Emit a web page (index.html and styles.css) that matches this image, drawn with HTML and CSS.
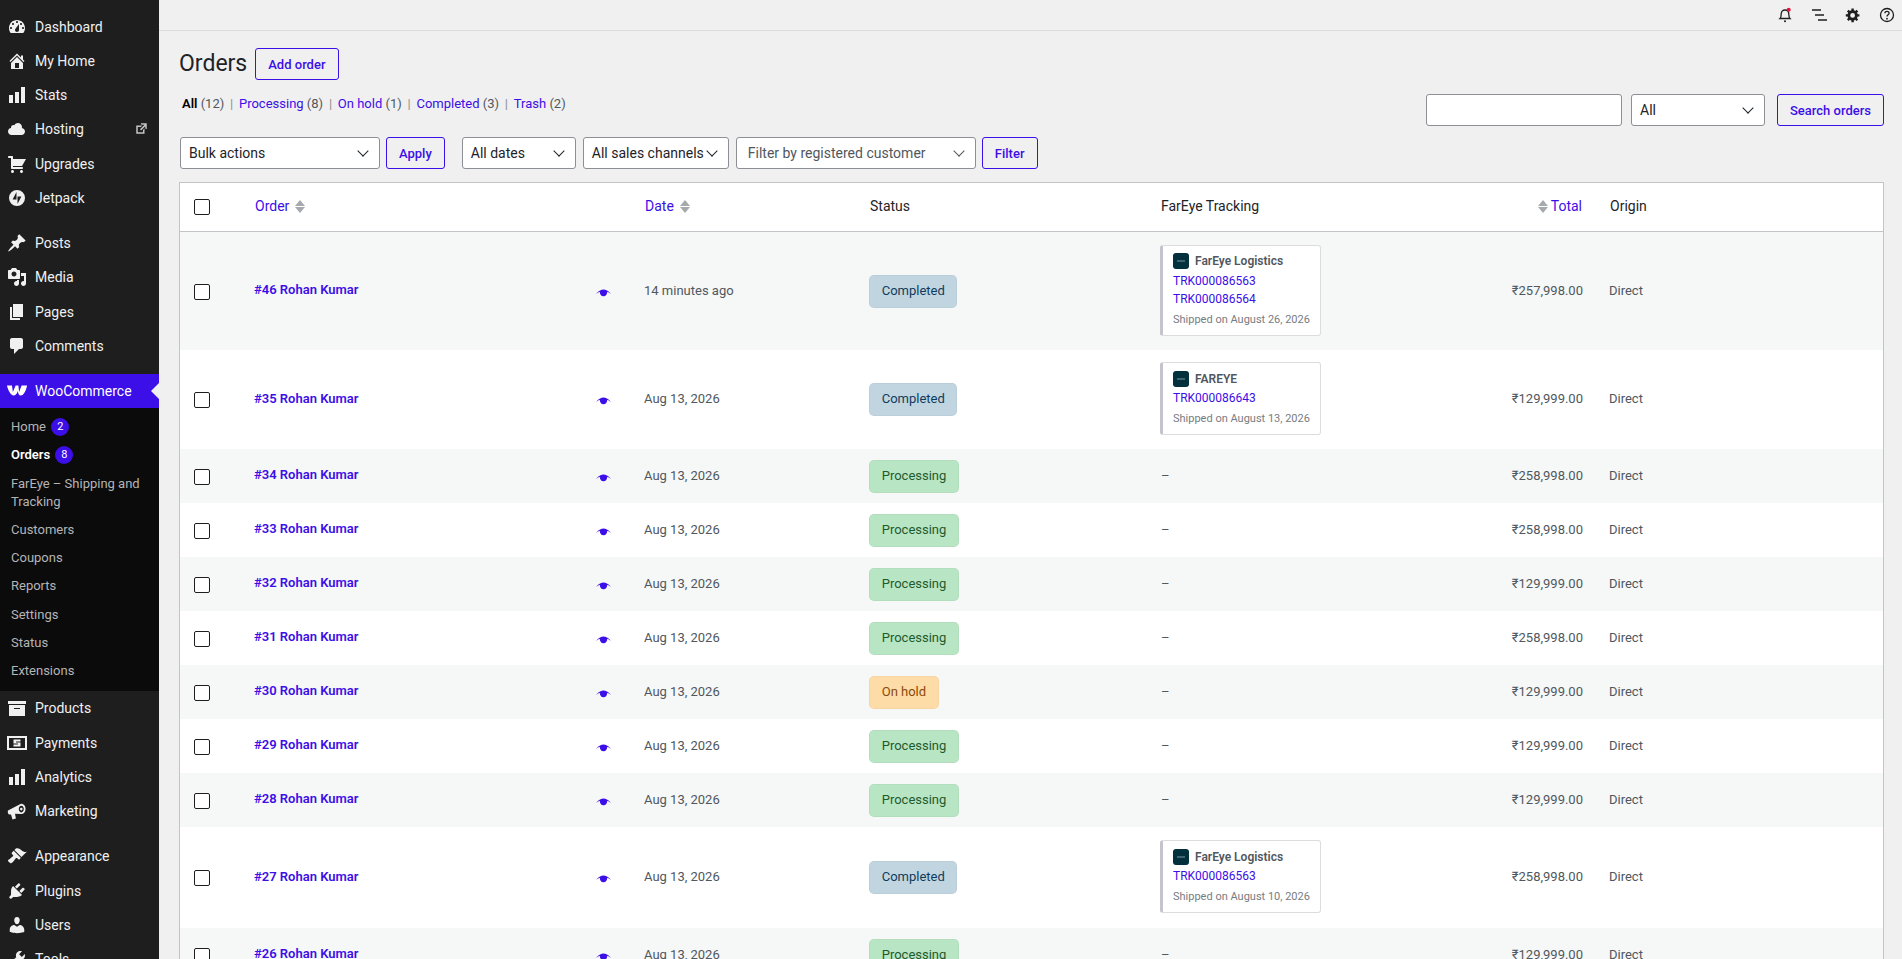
FILE: index.html
```html
<!DOCTYPE html>
<html lang="en">
<head>
  <meta charset="UTF-8" />
  <meta name="viewport" content="width=device-width, initial-scale=1.0" />
  <title>Orders</title>
  <link rel="stylesheet" href="styles.css">
</head>
<body>
  <aside class="sidebar">
    <ul class="menu">
      <li class="menu-item"><svg class="menu-icon" viewBox="0 0 20 20"><path fill-rule="evenodd" d="M3.76 16h12.48c1.1-1.37 1.76-3.11 1.76-5 0-4.42-3.58-8-8-8s-8 3.58-8 8c0 1.89.66 3.63 1.76 5zM10 4c.55 0 1 .45 1 1s-.45 1-1 1-1-.45-1-1 .45-1 1-1zM6 6c.55 0 1 .45 1 1s-.45 1-1 1-1-.45-1-1 .45-1 1-1zm8 0c.55 0 1 .45 1 1s-.45 1-1 1-1-.45-1-1 .45-1 1-1zm-5.37 5.55L12 7v6c0 1.1-.9 2-2 2s-2-.9-2-2c0-.57.24-1.08.63-1.45zM4 10c.55 0 1 .45 1 1s-.45 1-1 1-1-.45-1-1 .45-1 1-1zm12 0c.55 0 1 .45 1 1s-.45 1-1 1-1-.45-1-1 .45-1 1-1z"/></svg>Dashboard</li>
      <li class="menu-item"><svg class="menu-icon" viewBox="0 0 20 20"><path fill-rule="evenodd" d="M16 8.5l1.53 1.53-1.06 1.06L10 4.62l-6.47 6.47-1.06-1.06L10 2.5l4 4v-2h2v4zm-6-2.46l6 5.99V18H4v-5.97zM12 17v-5H8v5h4z"/></svg>My Home</li>
      <li class="menu-item"><svg class="menu-icon" viewBox="0 0 20 20"><path d="M18 18V2h-4v16h4zm-6 0V7H8v11h4zm-6 0v-8H2v8h4z"/></svg>Stats</li>
      <li class="menu-item"><svg class="menu-icon" viewBox="0 0 20 20"><path d="M14.9 9c1.8.2 3.1 1.7 3.1 3.5 0 1.9-1.6 3.5-3.5 3.5h-10C2.6 16 1 14.4 1 12.5 1 10.7 2.3 9.3 4.1 9.1 4 8.9 4 8.7 4 8.5 4 7.1 5.1 6 6.5 6c.3 0 .7.1.9.2C8.1 4.9 9.4 4 11 4c2.2 0 4 1.8 4 4 0 .4-.1.7-.1 1z"/></svg>Hosting<svg class="external" viewBox="0 0 20 20"><path d="M9 3h8v8l-2-1V6.92l-5.6 5.59-1.41-1.41L14.08 5H10zm3 12v-3l2-2v7H3V6h8L9 8H5v7h7z"/></svg></li>
      <li class="menu-item"><svg class="menu-icon" viewBox="0 0 20 20"><path d="M6 13h9c.55 0 1 .45 1 1s-.45 1-1 1H5c-.55 0-1-.45-1-1V4H2c-.55 0-1-.45-1-1s.45-1 1-1h3c.55 0 1 .45 1 1v2h13l-4 7H6v1zm-.5 3c.83 0 1.5.67 1.5 1.5S6.33 19 5.5 19 4 18.33 4 17.5 4.67 16 5.5 16zm9 0c.83 0 1.5.67 1.5 1.5s-.67 1.5-1.5 1.5-1.5-.67-1.5-1.5.67-1.5 1.5-1.5z"/></svg>Upgrades</li>
      <li class="menu-item"><svg class="menu-icon" viewBox="0 0 20 20"><path fill-rule="evenodd" d="M10 2a8 8 0 1 0 0 16 8 8 0 0 0 0-16zM9.5 4v7.500H5.600zM10.500 8.500h3.900L10.500 16z"/></svg>Jetpack</li>

      <li class="menu-item group-start"><svg class="menu-icon" viewBox="0 0 20 20"><path d="M10.44 3.02l1.82-1.82 6.36 6.35-1.83 1.82c-1.05-.68-2.48-.57-3.41.36l-.75.75c-.92.93-1.04 2.35-.35 3.41l-1.83 1.82-2.41-2.41-2.8 2.79c-.42.42-3.38 2.71-3.8 2.29s1.86-3.39 2.28-3.81l2.79-2.79L4.1 9.36l1.83-1.82c1.05.69 2.48.57 3.4-.36l.75-.75c.93-.92 1.05-2.35.36-3.41z"/></svg>Posts</li>
      <li class="menu-item"><svg class="menu-icon" viewBox="0 0 20 20"><path fill-rule="evenodd" d="M13 11V4c0-.55-.45-1-1-1h-1.67L9 1H5L3.67 3H2c-.55 0-1 .45-1 1v7c0 .55.45 1 1 1h10c.55 0 1-.45 1-1zM7 4.5c1.38 0 2.5 1.12 2.5 2.5S8.38 9.5 7 9.5 4.5 8.38 4.5 7 5.62 4.5 7 4.5zM14 6h5v10.5c0 1.38-1.12 2.5-2.5 2.5S14 17.88 14 16.5s1.12-2.5 2.5-2.5c.17 0 .34.02.5.05V9h-3V6zm-4 8.05V13h2v3.5c0 1.38-1.12 2.5-2.5 2.5S7 17.88 7 16.5 8.12 14 9.5 14c.17 0 .34.02.5.05z"/></svg>Media</li>
      <li class="menu-item"><svg class="menu-icon" viewBox="0 0 20 20"><path d="M6 15V2h10v13H6zm-1 1h8v2H3V5h2v11z"/></svg>Pages</li>
      <li class="menu-item"><svg class="menu-icon" viewBox="0 0 20 20"><path d="M5 2h9c1.1 0 2 .9 2 2v7c0 1.1-.9 2-2 2h-2l-5 5v-5H5c-1.1 0-2-.9-2-2V4c0-1.1.9-2 2-2z"/></svg>Comments</li>

      <li class="menu-item group-start current"><svg class="woo-icon" viewBox="0 0 24 14"><path d="M1 1.500h5.500l1 7 3-7h3l.8 7 2.700-7H23c-1 5-3.500 11-7 11-2 0-2.600-2-3-5-1.200 3-2.700 5-4.500 5C5 12.500 2 6 1 1.500z"/></svg>WooCommerce</li>
      <li>
        <ul class="submenu">
          <li>Home <span class="count">2</span></li>
          <li class="active">Orders <span class="count">8</span></li>
          <li>FarEye – Shipping and Tracking</li>
          <li>Customers</li>
          <li>Coupons</li>
          <li>Reports</li>
          <li>Settings</li>
          <li>Status</li>
          <li>Extensions</li>
        </ul>
      </li>
      <li class="menu-item"><svg class="menu-icon" viewBox="0 0 20 20"><path fill-rule="evenodd" d="M19 3v3H1V3h18zM2 7h16v11H2V7zm5 4h6v-1H7v1z"/></svg>Products</li>
      <li class="menu-item"><svg class="menu-icon" viewBox="0 0 20 20"><path fill-rule="evenodd" d="M0 3h20v14H0V3zm2 2v10h16V5H2zm4.500 1.500h7v2H9v1h4.500v4h-7v-2H11v-1H6.500v-4z"/></svg>Payments</li>
      <li class="menu-item"><svg class="menu-icon" viewBox="0 0 20 20"><path d="M18 18V2h-4v16h4zm-6 0V7H8v11h4zm-6 0v-8H2v8h4z"/></svg>Analytics</li>
      <li class="menu-item"><svg class="menu-icon" viewBox="0 0 20 20"><path fill-rule="evenodd" d="M1 9.500 12.500 3.500c1-.6 2-.8 3-.5 2.600.8 3.500 4.200 2.800 6.800-.600 2.200-2.300 3.600-4.300 3.200L8 12.700l.9 4.800-3.400.9L4 13.400l-1.700.1C1 13.500.5 10.300 1 9.500zm13.300-4.700c-1.500 0-2.500 1.500-2.500 3.300s1 3.300 2.500 3.300 2.500-1.500 2.500-3.300-1-3.300-2.500-3.300zm0 2a1.300 1.300 0 1 1 0 2.600 1.300 1.300 0 0 1 0-2.600z"/></svg>Marketing</li>

      <li class="menu-item group-start"><svg class="menu-icon" viewBox="0 0 20 20"><path d="M14.480 11.060L7.410 3.990l1.500-1.500c.5-.56 2.300-.47 3.510.32 1.210.8 1.430 1.280 2.910 2.100 1.180.64 2.450 1.260 4.450.85zm-.71.71L6.700 4.700 4.930 6.470c-.39.39-.39 1.020 0 1.410l1.060 1.060c.39.39.39 1.030 0 1.420-.6.6-1.430 1.110-2.210 1.690-.35.26-.7.53-1.010.84C1.430 13.230.4 14.400 1.400 15.400l1.410 1.410c1 1 2.170-.03 3.510-1.370.31-.31.58-.66.84-1.010.58-.78 1.090-1.610 1.690-2.210.39-.39 1.030-.39 1.420 0l1.060 1.060c.39.39 1.020.39 1.410 0z"/></svg>Appearance</li>
      <li class="menu-item"><svg class="menu-icon" viewBox="0 0 20 20"><path d="M13.110 4.360L9.870 7.600 8 5.730l3.240-3.240c.35-.34 1.050-.2 1.560.32.52.51.66 1.210.31 1.550zm-8 1.770l.91-1.120 9.010 9.010-1.190.84c-.71.71-2.630 1.160-3.820 1.160H6.140L4.900 17.260c-.59.59-1.540.59-2.120 0-.59-.58-.59-1.530 0-2.120l1.240-1.240v-3.880c0-1.130.4-3.190 1.090-3.890zm7.260 3.970l3.240-3.240c.34-.35 1.040-.21 1.550.31.52.51.66 1.210.31 1.550l-3.240 3.250z"/></svg>Plugins</li>
      <li class="menu-item"><svg class="menu-icon" viewBox="0 0 20 20"><path d="M10 9.250c-2.270 0-2.730-3.440-2.730-3.440C7 4.020 7.820 2 9.970 2c2.160 0 2.980 2.020 2.710 3.810 0 0-.41 3.440-2.680 3.440zm0 2.570L12.720 10c2.390 0 4.520 2.330 4.520 4.530v2.490s-3.650 1.130-7.240 1.130c-3.650 0-7.240-1.130-7.240-1.130v-2.490c0-2.250 1.940-4.480 4.470-4.480z"/></svg>Users</li>
      <li class="menu-item"><svg class="menu-icon" viewBox="0 0 20 20"><path fill-rule="evenodd" d="M16.680 9.770c-1.340 1.340-3.300 1.670-4.950.99l-5.410 6.520c-.99.99-2.590.99-3.580 0s-.99-2.590 0-3.570l6.520-5.420c-.68-1.650-.35-3.610.99-4.950 1.280-1.280 3.120-1.620 4.720-1.060l-2.890 2.890 2.820 2.820 2.860-2.870c.53 1.580.18 3.390-1.080 4.650zM3.810 16.210c.4.39 1.040.39 1.430 0 .4-.4.4-1.040 0-1.430-.39-.4-1.030-.4-1.430 0-.39.39-.39 1.030 0 1.430z"/></svg>Tools</li>
    </ul>
  </aside>

  <div class="main">
    <header class="topbar">
      <svg class="top-icon" viewBox="0 0 16 16"><path class="line" d="M3 11.500c1-1 1.200-2 1.200-4.500C4.200 4.500 6 3 8 3s3.800 1.500 3.800 4c0 2.500.2 3.500 1.200 4.500H3z"/><circle class="dark" cx="8" cy="14.300" r="1"/><circle class="dot" cx="11.700" cy="2.800" r="2"/></svg>
      <svg class="top-icon" viewBox="0 0 16 16"><path class="line" d="M1 3h9M4 8h9M7 13h9"/></svg>
      <svg class="top-icon" viewBox="0 0 20 20"><path class="dark" fill-rule="evenodd" d="M18 12h-2.180c-.17.7-.44 1.350-.81 1.930l1.540 1.540-2.100 2.100-1.540-1.540c-.58.36-1.230.64-1.910.81V19H8v-2.180c-.68-.17-1.330-.45-1.910-.81l-1.540 1.540-2.120-2.120 1.540-1.540c-.36-.58-.64-1.230-.81-1.890H1V9h2.180c.17-.7.45-1.350.81-1.940L2.450 5.520l2.100-2.100 1.540 1.540c.58-.36 1.230-.64 1.910-.81V2h3v2.180c.68.17 1.330.45 1.910.81l1.540-1.540 2.120 2.120-1.540 1.540c.36.580.64 1.230.81 1.890H18v3zm-8.500 1.500a3 3 0 1 0 0-6 3 3 0 0 0 0 6z"/></svg>
      <svg class="top-icon" viewBox="0 0 16 16"><circle class="line" cx="8" cy="8" r="6.500"/><path class="line" d="M5.900 6.300c0-1.200 1-2 2.100-2s2.100.8 2.100 1.900c0 1.700-2.100 1.600-2.100 3.400"/><circle class="dark" cx="8" cy="11.700" r=".9"/></svg>
    </header>

    <div class="wrap">
      <div class="heading-row">
        <h1>Orders</h1>
        <a class="btn add-order">Add order</a>
      </div>

      <div class="search-row">
        <ul class="subsubsub">
          <li><strong>All</strong> <span>(12)</span></li>
          <li><a>Processing</a> <span>(8)</span></li>
          <li><a>On hold</a> <span>(1)</span></li>
          <li><a>Completed</a> <span>(3)</span></li>
          <li><a>Trash</a> <span>(2)</span></li>
        </ul>
        <div class="search-box">
          <div class="field search-input"></div>
          <div class="field select search-type">All</div>
          <a class="btn search-btn">Search orders</a>
        </div>
      </div>

      <div class="filters">
        <div class="field select bulk">Bulk actions</div>
        <a class="btn">Apply</a>
        <div class="field select dates">All dates</div>
        <div class="field select channels">All sales channels</div>
        <div class="field select customer">Filter by registered customer</div>
        <a class="btn">Filter</a>
      </div>

      <table class="orders">
        <colgroup>
          <col class="col-check"><col class="col-order"><col class="col-date"><col class="col-status"><col class="col-track"><col class="col-total"><col>
        </colgroup>
        <thead>
          <tr>
            <th><span class="check"></span></th>
            <th><a>Order</a><span class="sort"></span></th>
            <th><a>Date</a><span class="sort"></span></th>
            <th>Status</th>
            <th>FarEye Tracking</th>
            <th class="right"><span class="sort before"></span><a>Total</a></th>
            <th>Origin</th>
          </tr>
        </thead>
        <tbody>
          <tr class="h118">
            <td><span class="check"></span></td>
            <td><div class="order-cell"><a>#46 Rohan Kumar</a><svg class="eye" viewBox="0 0 20 12"><path d="M0 8C4 3.500 7 2 10 2s6 1.500 10 6c-3-2-4.500-3-5-3 0 3.500-2 6-5 6S5 8.500 5 5c-.5 0-2 1-5 3z"/></svg></div></td>
            <td>14 minutes ago</td>
            <td class="status-cell"><span class="status completed">Completed</span></td>
            <td>
              <div class="track">
                <div class="carrier"><span class="logo"></span>FarEye Logistics</div>
                <a>TRK000086563</a>
                <a>TRK000086564</a>
                <div class="shipped">Shipped on August 26, 2026</div>
              </div>
            </td>
            <td class="right">₹257,998.00</td>
            <td>Direct</td>
          </tr>
          <tr class="h99">
            <td><span class="check"></span></td>
            <td><div class="order-cell"><a>#35 Rohan Kumar</a><svg class="eye" viewBox="0 0 20 12"><path d="M0 8C4 3.500 7 2 10 2s6 1.500 10 6c-3-2-4.500-3-5-3 0 3.500-2 6-5 6S5 8.500 5 5c-.5 0-2 1-5 3z"/></svg></div></td>
            <td>Aug 13, 2026</td>
            <td class="status-cell"><span class="status completed">Completed</span></td>
            <td>
              <div class="track">
                <div class="carrier"><span class="logo"></span>FAREYE</div>
                <a>TRK000086643</a>
                <div class="shipped">Shipped on August 13, 2026</div>
              </div>
            </td>
            <td class="right">₹129,999.00</td>
            <td>Direct</td>
          </tr>
          <tr>
            <td><span class="check"></span></td>
            <td><div class="order-cell"><a>#34 Rohan Kumar</a><svg class="eye" viewBox="0 0 20 12"><path d="M0 8C4 3.500 7 2 10 2s6 1.500 10 6c-3-2-4.500-3-5-3 0 3.500-2 6-5 6S5 8.500 5 5c-.5 0-2 1-5 3z"/></svg></div></td>
            <td>Aug 13, 2026</td>
            <td class="status-cell"><span class="status processing">Processing</span></td>
            <td>–</td>
            <td class="right">₹258,998.00</td>
            <td>Direct</td>
          </tr>
          <tr>
            <td><span class="check"></span></td>
            <td><div class="order-cell"><a>#33 Rohan Kumar</a><svg class="eye" viewBox="0 0 20 12"><path d="M0 8C4 3.500 7 2 10 2s6 1.500 10 6c-3-2-4.500-3-5-3 0 3.500-2 6-5 6S5 8.500 5 5c-.5 0-2 1-5 3z"/></svg></div></td>
            <td>Aug 13, 2026</td>
            <td class="status-cell"><span class="status processing">Processing</span></td>
            <td>–</td>
            <td class="right">₹258,998.00</td>
            <td>Direct</td>
          </tr>
          <tr>
            <td><span class="check"></span></td>
            <td><div class="order-cell"><a>#32 Rohan Kumar</a><svg class="eye" viewBox="0 0 20 12"><path d="M0 8C4 3.500 7 2 10 2s6 1.500 10 6c-3-2-4.500-3-5-3 0 3.500-2 6-5 6S5 8.500 5 5c-.5 0-2 1-5 3z"/></svg></div></td>
            <td>Aug 13, 2026</td>
            <td class="status-cell"><span class="status processing">Processing</span></td>
            <td>–</td>
            <td class="right">₹129,999.00</td>
            <td>Direct</td>
          </tr>
          <tr>
            <td><span class="check"></span></td>
            <td><div class="order-cell"><a>#31 Rohan Kumar</a><svg class="eye" viewBox="0 0 20 12"><path d="M0 8C4 3.500 7 2 10 2s6 1.500 10 6c-3-2-4.500-3-5-3 0 3.500-2 6-5 6S5 8.500 5 5c-.5 0-2 1-5 3z"/></svg></div></td>
            <td>Aug 13, 2026</td>
            <td class="status-cell"><span class="status processing">Processing</span></td>
            <td>–</td>
            <td class="right">₹258,998.00</td>
            <td>Direct</td>
          </tr>
          <tr>
            <td><span class="check"></span></td>
            <td><div class="order-cell"><a>#30 Rohan Kumar</a><svg class="eye" viewBox="0 0 20 12"><path d="M0 8C4 3.500 7 2 10 2s6 1.500 10 6c-3-2-4.500-3-5-3 0 3.500-2 6-5 6S5 8.500 5 5c-.5 0-2 1-5 3z"/></svg></div></td>
            <td>Aug 13, 2026</td>
            <td class="status-cell"><span class="status on-hold">On hold</span></td>
            <td>–</td>
            <td class="right">₹129,999.00</td>
            <td>Direct</td>
          </tr>
          <tr>
            <td><span class="check"></span></td>
            <td><div class="order-cell"><a>#29 Rohan Kumar</a><svg class="eye" viewBox="0 0 20 12"><path d="M0 8C4 3.500 7 2 10 2s6 1.500 10 6c-3-2-4.500-3-5-3 0 3.500-2 6-5 6S5 8.500 5 5c-.5 0-2 1-5 3z"/></svg></div></td>
            <td>Aug 13, 2026</td>
            <td class="status-cell"><span class="status processing">Processing</span></td>
            <td>–</td>
            <td class="right">₹129,999.00</td>
            <td>Direct</td>
          </tr>
          <tr>
            <td><span class="check"></span></td>
            <td><div class="order-cell"><a>#28 Rohan Kumar</a><svg class="eye" viewBox="0 0 20 12"><path d="M0 8C4 3.500 7 2 10 2s6 1.500 10 6c-3-2-4.500-3-5-3 0 3.500-2 6-5 6S5 8.500 5 5c-.5 0-2 1-5 3z"/></svg></div></td>
            <td>Aug 13, 2026</td>
            <td class="status-cell"><span class="status processing">Processing</span></td>
            <td>–</td>
            <td class="right">₹129,999.00</td>
            <td>Direct</td>
          </tr>
          <tr class="h101">
            <td><span class="check"></span></td>
            <td><div class="order-cell"><a>#27 Rohan Kumar</a><svg class="eye" viewBox="0 0 20 12"><path d="M0 8C4 3.500 7 2 10 2s6 1.500 10 6c-3-2-4.500-3-5-3 0 3.500-2 6-5 6S5 8.500 5 5c-.5 0-2 1-5 3z"/></svg></div></td>
            <td>Aug 13, 2026</td>
            <td class="status-cell"><span class="status completed">Completed</span></td>
            <td>
              <div class="track">
                <div class="carrier"><span class="logo"></span>FarEye Logistics</div>
                <a>TRK000086563</a>
                <div class="shipped">Shipped on August 10, 2026</div>
              </div>
            </td>
            <td class="right">₹258,998.00</td>
            <td>Direct</td>
          </tr>
          <tr>
            <td><span class="check"></span></td>
            <td><div class="order-cell"><a>#26 Rohan Kumar</a><svg class="eye" viewBox="0 0 20 12"><path d="M0 8C4 3.500 7 2 10 2s6 1.500 10 6c-3-2-4.500-3-5-3 0 3.500-2 6-5 6S5 8.500 5 5c-.5 0-2 1-5 3z"/></svg></div></td>
            <td>Aug 13, 2026</td>
            <td class="status-cell"><span class="status processing">Processing</span></td>
            <td>–</td>
            <td class="right">₹129,999.00</td>
            <td>Direct</td>
          </tr>
        </tbody>
      </table>
    </div>
  </div>
</body>
</html>
```

FILE: styles.css
```css
:root {
  --accent: #3c0ee8;
  --text: #1d2327;
  --muted: #50575e;
  --border: #c3c4c7;
}

html, body {
  margin: 0;
  padding: 0;
  height: 100%;
  overflow: hidden;
}

body {
  display: flex;
  font-family: Roboto, sans-serif;
  font-size: 13px;
  color: var(--text);
  background: #f0f0f0;
}

ul {
  list-style: none;
  margin: 0;
  padding: 0;
}

/* sidebar */
.sidebar {
  width: 159px;
  flex: none;
  height: 100%;
  overflow: hidden;
  background: #1e1e1e;
  color: #f0f0f1;
}

.menu {
  padding-top: 9.5px;
}

.menu-item {
  position: relative;
  display: flex;
  align-items: center;
  height: 34.25px;
  font-size: 14px;
  padding-left: 35px;
}

.group-start {
  margin-top: 11px;
}

.menu-icon {
  position: absolute;
  left: 7px;
  top: 7px;
  width: 20px;
  height: 20px;
  fill: #f0f0f1;
}

.woo-icon {
  position: absolute;
  left: 6px;
  top: 10px;
  width: 22px;
  height: 13px;
  fill: #fff;
}

.external {
  position: absolute;
  left: 134px;
  top: 9px;
  width: 15px;
  height: 15px;
  fill: #c3c4c7;
}

.current {
  background: var(--accent);
  color: #fff;
}

.current::after {
  content: "";
  position: absolute;
  right: 0;
  top: 9px;
  border: 8px solid transparent;
  border-right-color: #f0f0f0;
}

.submenu {
  background: #0b0b0b;
  padding: 5px 0 6px;
  height: 272px;
  color: #b4b4b6;
  font-size: 13px;
  line-height: 18.2px;
}

.submenu li {
  padding: 5px 12px 5px 11px;
}

.submenu .active {
  color: #fff;
  font-weight: 600;
}

.count {
  display: inline-block;
  width: 18px;
  height: 18px;
  margin-left: 2px;
  border-radius: 9px;
  background: var(--accent);
  color: #fff;
  font-size: 11px;
  font-weight: 400;
  line-height: 18px;
  text-align: center;
  vertical-align: top;
}

/* top bar */
.main {
  flex: 1;
  min-width: 0;
}

.topbar {
  display: flex;
  justify-content: flex-end;
  align-items: center;
  gap: 18px;
  height: 30px;
  padding-right: 7px;
  border-bottom: 1px solid #dcdcde;
}

.top-icon {
  width: 16px;
  height: 16px;
}

.top-icon .line {
  fill: none;
  stroke: #1e1e1e;
  stroke-width: 1.3;
}

.top-icon .dark {
  fill: #1e1e1e;
}

.top-icon .dot {
  fill: #e6143c;
}

.wrap {
  padding: 17px 18px 0 20px;
}

/* header rows */
.heading-row {
  display: flex;
  align-items: center;
  gap: 8px;
  height: 32px;
}

h1 {
  margin: 0;
  font-size: 23px;
  font-weight: 400;
  line-height: 32px;
}

.btn {
  display: flex;
  align-items: center;
  box-sizing: border-box;
  height: 32px;
  padding: 0 12px;
  border: 1px solid var(--accent);
  border-radius: 3px;
  color: var(--accent);
  font-weight: 500;
  white-space: nowrap;
}

.search-row {
  display: flex;
  justify-content: space-between;
  height: 42px;
  margin-top: 15px;
}

.subsubsub {
  display: flex;
  height: 18px;
  padding-left: 3px;
  line-height: 18px;
  color: var(--muted);
}

.subsubsub li + li::before {
  content: "|";
  margin: 0 5.75px;
  color: #8c8f94;
}

.subsubsub strong {
  color: #000;
  font-weight: 600;
}

.subsubsub a {
  color: var(--accent);
}

.search-box {
  display: flex;
  margin-left: auto;
  margin-top: -1px;
  height: 32px;
}

.field {
  display: flex;
  align-items: center;
  box-sizing: border-box;
  height: 32px;
  background: #fff;
  border: 1px solid #8c8f94;
  border-radius: 3px;
  font-size: 14px;
  padding: 0 8px;
  white-space: nowrap;
}

.select {
  position: relative;
}

/* chevron of a select */
.select::after {
  content: "";
  position: absolute;
  right: 12px;
  top: 9px;
  width: 7px;
  height: 7px;
  border: solid #1d2327;
  border-width: 0 1.7px 1.7px 0;
  transform: rotate(45deg);
}

.search-input {
  width: 196px;
  margin-right: 9px;
}

.search-type {
  width: 134px;
  margin-right: 12px;
}

.search-btn {
  width: 107px;
}

.filters {
  display: flex;
  gap: 6px;
  height: 32px;
  padding-left: 1px;
}

.bulk {
  width: 200px;
}

.dates {
  width: 114px;
  margin-left: 11px;
}

.channels {
  width: 146px;
  margin-left: 1px;
}

.customer {
  width: 240px;
  margin-left: 1px;
  padding-left: 11px;
  color: var(--muted);
}

.customer::after {
  border-color: #50575e;
}

/* table */
.orders {
  table-layout: fixed;
  width: 100%;
  margin-top: 13px;
  border: 1px solid var(--border);
  border-collapse: separate;
  border-spacing: 0;
  background: #fff;
}

.col-check { width: 65px; }
.col-order { width: 390px; }
.col-date { width: 225px; }
.col-status { width: 291px; }
.col-track { width: 249px; }
.col-total { width: 200px; }

th {
  box-sizing: border-box;
  height: 49px;
  padding: 0 10px 2px;
  border-bottom: 1px solid var(--border);
  font-size: 14px;
  font-weight: 400;
  text-align: left;
}

th a {
  color: var(--accent);
}

th.right {
  padding-right: 18px;
}

td {
  box-sizing: border-box;
  height: 54px;
  padding: 0 10px 2px;
  color: var(--muted);
}

td:nth-child(2), td:nth-child(3), td:nth-child(7) {
  padding-left: 9px;
}

td.status-cell {
  padding-bottom: 0;
}

tbody tr:nth-child(odd) {
  background: #f6f7f7;
}

.h118 td {
  height: 118px;
}

.h99 td {
  height: 99px;
}

.h101 td {
  height: 101px;
}

th:first-child, td:first-child {
  padding: 0 0 0 14px;
}

td:first-child {
  padding-top: 1px;
}

.right {
  text-align: right;
  padding-right: 17px;
}

.check {
  display: block;
  width: 14px;
  height: 14px;
  border: 1px solid #1e1e1e;
  border-radius: 2px;
  background: #fff;
}

.sort {
  display: inline-block;
  position: relative;
  width: 10px;
  height: 15px;
  margin-left: 6px;
  vertical-align: -3px;
}

.sort::before, .sort::after {
  content: "";
  position: absolute;
  left: 0;
  border: 5px solid transparent;
}

.sort::before {
  top: -4px;
  border-bottom: 6.5px solid #a7aaad;
}

.sort::after {
  bottom: -4px;
  border-top: 6.5px solid #a7aaad;
}

.sort.before {
  margin: 0 3px 0 0;
}

.order-cell {
  display: flex;
  justify-content: space-between;
  align-items: center;
  padding-right: 14px;
}

.order-cell a {
  color: var(--accent);
  font-weight: 600;
  margin-top: -1px;
}

.eye {
  width: 15px;
  height: 9px;
  margin-top: 4px;
  fill: var(--accent);
}

.status {
  display: inline-block;
  padding: 0 11.7px 1px;
  margin-left: -1px;
  border: 1px solid rgba(0, 0, 0, 0.03);
  border-radius: 5px;
  line-height: 30px;
}

.completed {
  background: #c1d5e1;
  color: #0f3c5c;
}

.processing {
  background: #b8e6c5;
  color: #1f5a2c;
}

.on-hold {
  background: #fedca8;
  color: #8a4b08;
}

.track {
  box-sizing: border-box;
  width: 161px;
  padding: 7px 8px 6px 10px;
  margin-left: -1px;
  background: #fff;
  border: 1px solid #dcdcde;
  border-left: 3px solid #c3c4cc;
  border-radius: 3px;
  font-size: 12px;
  line-height: 18px;
}

.track a {
  display: block;
  color: var(--accent);
}

.carrier {
  display: flex;
  align-items: center;
  gap: 6px;
  height: 17px;
  margin-bottom: 2px;
  color: var(--muted);
  font-weight: 600;
}

.logo {
  position: relative;
  width: 16px;
  height: 16px;
  border-radius: 3px;
  background: #02303c;
}

/* the tiny pale mark inside the carrier logo */
.logo::after {
  content: "";
  position: absolute;
  left: 4px;
  top: 7px;
  width: 8px;
  height: 2px;
  background: #3f6570;
}

.shipped {
  margin-top: 3px;
  color: #787c82;
  font-size: 11px;
}
```
